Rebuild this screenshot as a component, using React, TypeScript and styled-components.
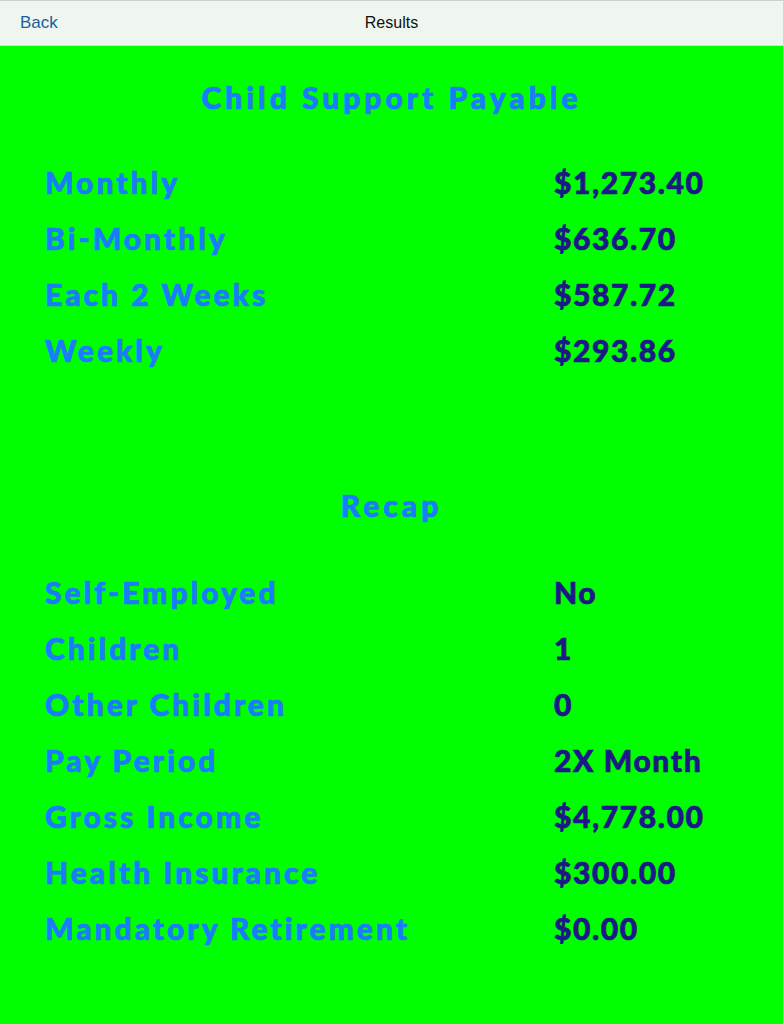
import React from 'react';
import styled, { createGlobalStyle } from 'styled-components';

const GlobalStyle = createGlobalStyle`
  html, body {
    margin: 0;
    padding: 0;
    background: #00ff00;
  }
`;

const Page = styled.div`
  min-height: 1024px;
  background: #00ff00;
  display: flex;
  flex-direction: column;
`;

const NavBar = styled.div`
  height: 44px;
  display: grid;
  grid-template-columns: 1fr auto 1fr;
  align-items: center;
  background: #eef6ef;
  border-top: 1px solid #c9d2cb;
  border-bottom: 1px solid #d3dbd5;
  font-family: "Liberation Sans", Arial, sans-serif;
  font-size: 17px;
`;

const BackButton = styled.span`
  color: #1d5e9e;
  padding-left: 20px;
`;

const NavTitle = styled.span`
  color: #111;
  font-size: 16px;
`;

const Content = styled.div`
  display: flex;
  flex-direction: column;
  padding-top: 23px;
  font-family: Lato, "Noto Sans", sans-serif;
  font-weight: 900;
  -webkit-text-stroke: 0.7px currentColor;
`;

const Section = styled.section<{ $gapAfter?: number }>`
  display: flex;
  flex-direction: column;
  margin-bottom: ${p => p.$gapAfter ?? 0}px;
`;

const Heading = styled.h2<{ $gap?: number }>`
  margin: 0 0 ${p => p.$gap ?? 29}px;
  height: 56px;
  line-height: 56px;
  text-align: center;
  color: #1a7cfb;
  font-size: 30px;
  font-weight: 900;
  letter-spacing: 4px;
`;

const Row = styled.div`
  display: grid;
  grid-template-columns: 509px 1fr;
  padding-left: 45px;
  height: 56px;
  line-height: 56px;
  font-size: 30px;
`;

const Label = styled.span`
  color: #1a7cfb;
  white-space: nowrap;
  letter-spacing: 3px;
`;

const Value = styled.span`
  color: #1c1888;
  white-space: nowrap;
  letter-spacing: 1.6px;
`;

const payable: [string, string][] = [
  ['Monthly', '$1,273.40'],
  ['Bi-Monthly', '$636.70'],
  ['Each 2 Weeks', '$587.72'],
  ['Weekly', '$293.86'],
];

const recap: [string, string][] = [
  ['Self-Employed', 'No'],
  ['Children', '1'],
  ['Other Children', '0'],
  ['Pay Period', '2X Month'],
  ['Gross Income', '$4,778.00'],
  ['Health Insurance', '$300.00'],
  ['Mandatory Retirement', '$0.00'],
];

export default function App(): React.ReactElement {
  return (
    <Page>
      <GlobalStyle />
      <NavBar>
        <BackButton>Back</BackButton>
        <NavTitle>Results</NavTitle>
        <span />
      </NavBar>
      <Content>
        <Section $gapAfter={99}>
          <Heading>Child Support Payable</Heading>
          {payable.map(([label, value]) => (
            <Row key={label}>
              <Label>{label}</Label>
              <Value>{value}</Value>
            </Row>
          ))}
        </Section>
        <Section>
          <Heading $gap={31}>Recap</Heading>
          {recap.map(([label, value]) => (
            <Row key={label}>
              <Label>{label}</Label>
              <Value>{value}</Value>
            </Row>
          ))}
        </Section>
      </Content>
    </Page>
  );
}
